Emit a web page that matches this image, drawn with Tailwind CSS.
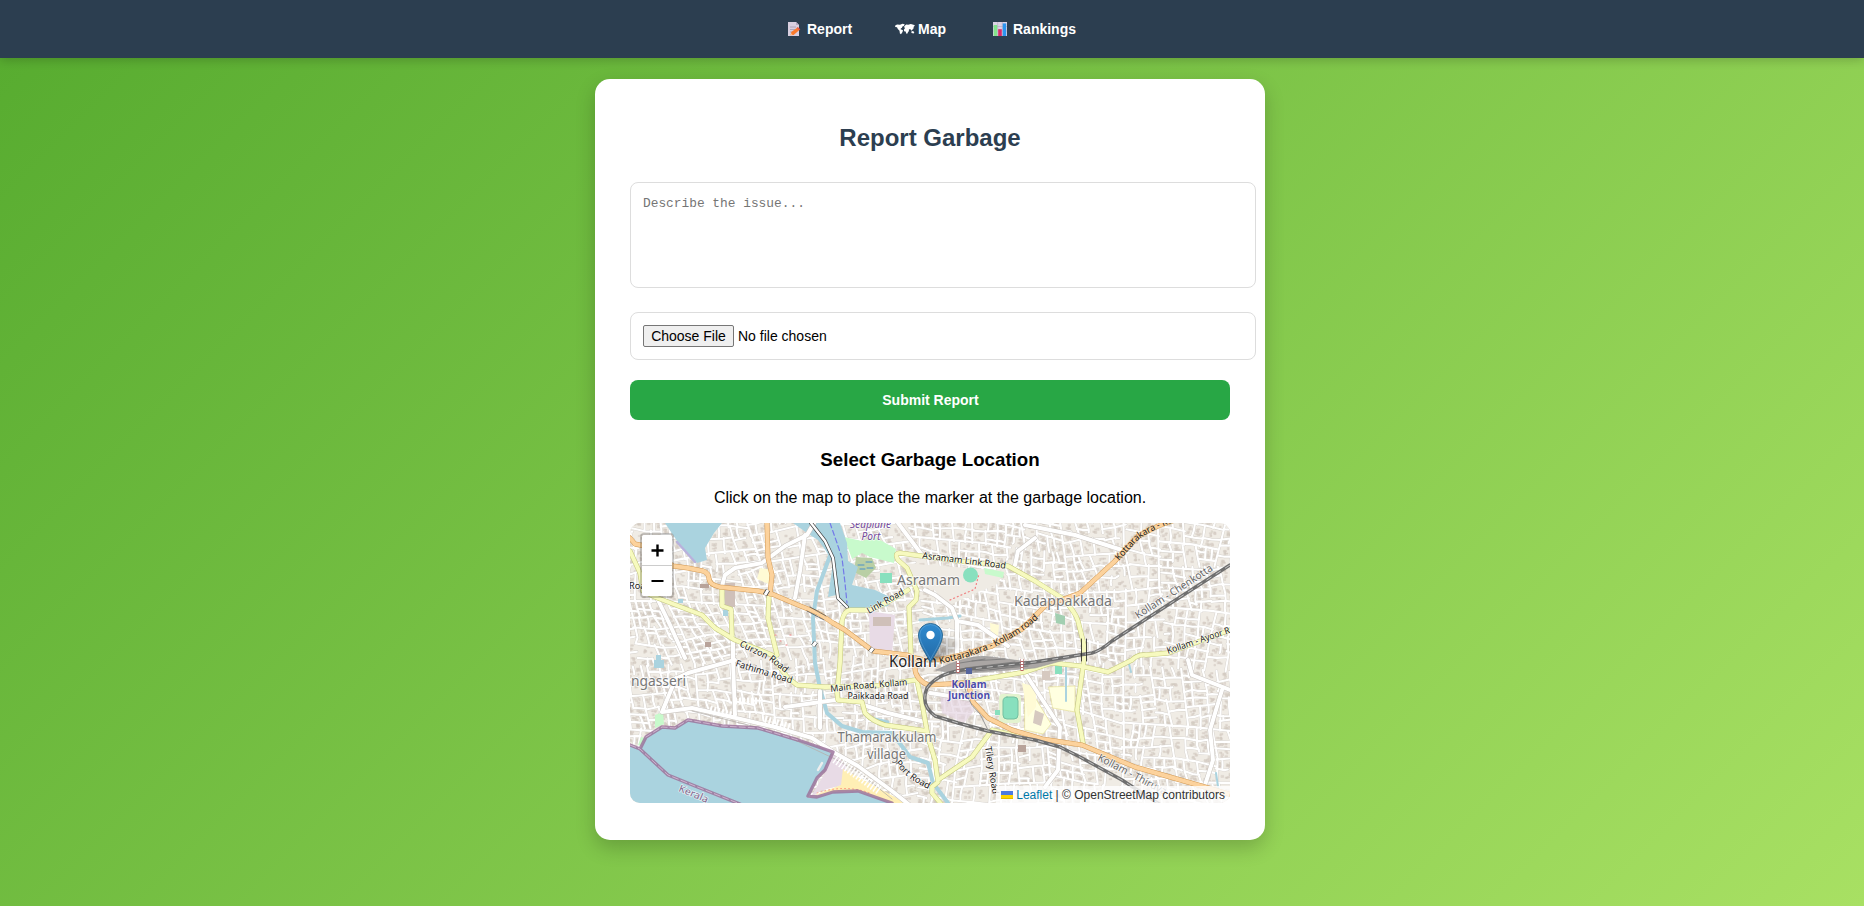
<!DOCTYPE html>
<html lang="en">
<head>
<meta charset="utf-8">
<title>Report Garbage</title>
<script src="https://cdn.jsdelivr.net/npm/@tailwindcss/browser@4"></script>
</head>
<body class="h-[906px] overflow-hidden bg-linear-[135deg,#56ab2f,#a8e063] font-['Liberation_Sans',Arial,sans-serif] text-black">
<nav class="relative flex h-[58px] items-center bg-[#2c3e50] pl-[787px] text-[14px] font-bold text-white shadow-[0_2px_10px_rgba(0,0,0,0.2)]">
  <a class="flex w-[108px] items-center">
    <svg class="mr-[6px] h-[14px] w-[14px]" viewBox="0 0 14 14"><path d="M1 0h8l3 3v11H1z" fill="#d9cfe0"/><path d="M9 0v3h3z" fill="#b5a9c2"/><path d="M3 5h6M3 7.500h5M3 10h3" stroke="#a399b0" stroke-width=".8"/><path d="M3.500 13.300l.8-3.200L9.800 6l2.300 2.300L6.600 13z" fill="#fa7a2c"/><path d="M9.500 6l1.300-1.100 2.500 2.400-1.200 1.200z" fill="#ea5540"/><path d="M3.500 13.300l.6-2 1.500 1.500z" fill="#ffc08a"/></svg>
    <span>Report</span>
  </a>
  <a class="flex w-[98px] items-center">
    <svg class="mr-[3px] h-[12px] w-[20px]" viewBox="0 0 20 12" fill="#fff"><path d="M0 2.800L2 1.500l3 .2L7.500.8l2.200.5L8.800 3l-1.400.6-.4 1.200L5.800 5.600l-.2.700 2.400 1L7.500 9 6 11.300 4.900 10.500l-.4-2.700-1.700-1.700L2 4.200.3 4z"/><path d="M9.200 3.300l2-1.700 2 .2 2.600-.8 2.700.7 1.500.8-1.300 1.200-.2 1.700-1.200 1.400-.8 1-.8-1.400-1-.3-1 1 .4.800-1.100 1-.5 1.600-1.100.3-.8-2.300-1.500-.3-.2-1.700.9-.8z"/><path d="M16.300 8.500l1.700-.6 1.300 1.300-.7 1.200-2.100-.4z"/></svg>
    <span>Map</span>
  </a>
  <a class="flex items-center">
    <svg class="mr-[6px] h-[14px] w-[14px]" viewBox="0 0 14 14"><path d="M0 0h14v14H0z" fill="#dcd2e5"/><path d="M0 4.500h14M0 9h14M4.700 0v14M9.300 0v14" stroke="#b3a8be" stroke-width=".6"/><path d="M.7 3h3.500v11H.7z" fill="#83e38b"/><path d="M5.200 7.200h3.600V14H5.200z" fill="#d92867"/><path d="M9.700 1.400h3.500V14H9.700z" fill="#2c95f0"/></svg>
    <span>Rankings</span>
  </a>
</nav>

<main class="mx-auto mt-[21px] flex h-[761px] w-[670px] -translate-x-[2px] flex-col rounded-[15px] bg-white px-[35px] shadow-[0_8px_20px_rgba(0,0,0,0.2)]">
  <h2 class="mt-[45px] text-center text-[24px] leading-[28px] font-bold text-[#2c3e50]">Report Garbage</h2>
  <textarea class="mt-[30px] h-[106px] w-[626px] shrink-0 resize-none rounded-[8px] border border-[#ddd] px-[12px] py-[12px] font-['Liberation_Mono',monospace] text-[12.85px] leading-[18px] placeholder:text-[#757575]" placeholder="Describe the issue..."></textarea>
  <div class="mt-[24px] flex h-[48px] w-[626px] items-center rounded-[8px] border border-[#ddd] px-[12px] text-[14px]">
    <button class="h-[22px] w-[91px] rounded-[2px] border border-[#767676] bg-[#efefef] leading-[20px] whitespace-nowrap">Choose File</button>
    <span class="ml-[4px]">No file chosen</span>
  </div>
  <button class="mt-[20px] h-[40px] w-full shrink-0 rounded-[8px] bg-[#28a745] pl-px text-[14px] font-bold text-white">Submit Report</button>
  <h3 class="mt-[29px] text-center text-[18.72px] leading-[22px] font-bold">Select Garbage Location</h3>
  <p class="mt-[18px] text-center text-[16px] leading-[18px]">Click on the map to place the marker at the garbage location.</p>

  <div class="relative mt-[16px] h-[280px] w-[600px] shrink-0 overflow-hidden rounded-[10px] bg-[#f0ece5]">
    <svg class="block h-[280px] w-[600px] font-['Noto_Sans',sans-serif]" viewBox="0 0 600 280" fill="none" stroke-linejoin="round" stroke-linecap="round">
      <path id="buildings" fill="#dfd7cf" stroke="#d2c9c0" stroke-width=".35"/>
      <path id="lanesCase" stroke="#d3cfca" stroke-width="2.900"/>
      <path id="lanes" stroke="#fff" stroke-width="2.100"/>

      <!-- land use -->
      <path d="M274 40L376 48 366 62 345 70 320 82 303 66 288 62z" fill="#efebe4"/>
      <path d="M239 88L265 92 262 132 240 128z" fill="#e8dbe6"/>
      <path d="M243 94h18v9h-18zM95 60h10v24h-10z" fill="#cfc0b9"/><path d="M70 61h9v4h-9zM75 119h6v5h-6zM388 222h8v7h-8z" fill="#b8a39a"/>
      <path d="M214 14L232 18 245 14 266 26 264 40 240 34 232 30 222 36z" fill="#c8facc"/>
      <path d="M226 34l16 1 4 10-10 10-12-6z" fill="#b9cfa5"/><path d="M228 42h6M236 39h6M230 46h5M237 45h6" stroke="#4a91c8"/>
      <path d="M250 50h12v10h-12zM425 142h7v9h-7zM429 174h6v6h-6z" fill="#88e0be"/>
      <path d="M354 45l20 4-1 6-18-4zM25 192l8-3 1 12-9 4zM11 214l9 2-4 9-8-3z" fill="#c8facc"/><path d="M425 90l10 3v9l-9-2z" fill="#a2cfb1"/>
      <circle cx="340.500" cy="52" r="7.500" fill="#88e0be"/>
      <path d="M395 172l8-1 18 30-8 10-18-4zM419 164l26-1v26l-22-4z" fill="#ffffe0" stroke="#e8e39a" stroke-width=".7"/>
      <path d="M130 45l12 2-1 15-14-6zM392 160l14 4v20l-8 10zM360 100l9 2-1 12-7 2z" fill="#fffbd5"/>
      <path d="M405 187l9 4-3 12-8-3zM412 148h8v9h-8z" fill="#d6c9c0"/>
      <rect x="369" y="171" width="22" height="29" rx="4" fill="#e3f3cf"/>
      <rect x="373" y="174" width="15" height="22" rx="4" fill="#88e0be" stroke="#74bfa0"/>
      <path d="M365 187h5v5h-5z" fill="#88e0be"/>
      <path d="M310 170l28 0 6 18-10 12-22-10z" fill="#e6d5e3" opacity=".7"/>

      <!-- water -->
      <g fill="#aad3df">
        <path d="M35 0L47 18 67 40 77 37 75 25 84 10 92 0z"/>
        <path d="M163 0H210L217 20 218 38 228 44 222 62 245 67 262 75 258 83 230 88 213 83 206 72 198 74 203 40 196 28 188 17 177 10z"/>
        <path d="M93 87h5v6h-5zM48 76h5v4h-5zM24 137h10v8h-10zM26 132h5v6h-5z"/>
        <path d="M0 222L10 226 16 214 32 204 45 205 58 197 92 203 128 205 168 217 203 229 195 247 187 255 178 275 187 274 203 269 228 268 262 280H0z"/>
      </g>
      <path d="M201 30L187 68 183 95 185 140 190 165 197 190 212 203 232 209 262 210 280 234 298 240 303 260 318 280" stroke="#aad3df" stroke-width="4"/>
      <path d="M245 196L258 199M290 97l28-2 12-2" stroke="#aad3df" stroke-width="3"/>
      <path d="M436 140v38M498 137l3 12M586 250l3 20" stroke="#aad3df" stroke-width="2"/>
      <path d="M47 19L65 39" stroke="#b8b2dc" stroke-width="2.500"/>
      <path d="M203 230L216 242 212 262 190 268 180 275 195 250z" fill="#e8dbe6"/>
      <path d="M185 272L211 262 213 246 276 280H262L228 268 205 269z" fill="#ffefb5"/>
      <path d="M187 270Q215 261 240 270" stroke="#ff9e80" stroke-dasharray="1 3"/>

      <!-- local streets -->
      <path stroke="#c9c4bf" stroke-width="5" d="M92 63L95 52 105 45 132 40 155 23 177 12 184 0M175 12L170 48 165 75M28 77L40 102 55 135M32 189L62 185 102 194 145 204 182 215 205 230 228 243 262 268 282 284M103 113V137L105 192M43 157L58 150 105 137M32 189L46 155M268 0L280 16 292 32M295 67L305 72 322 85 327 98 348 102 378 123M405 15L388 28 385 42M395 2L445 12 495 28M395 150L430 204 428 247 415 264M600 167L562 152 558 137M592 167L580 207 583 237 575 262M218 177L258 190 295 199M155 184L205 177M190 168V205M327 97V137M300 170L340 176"/>
      <path stroke="#fff" stroke-width="4" d="M92 63L95 52 105 45 132 40 155 23 177 12 184 0M175 12L170 48 165 75M28 77L40 102 55 135M32 189L62 185 102 194 145 204 182 215 205 230 228 243 262 268 282 284M103 113V137L105 192M43 157L58 150 105 137M32 189L46 155M268 0L280 16 292 32M295 67L305 72 322 85 327 98 348 102 378 123M405 15L388 28 385 42M395 2L445 12 495 28M395 150L430 204 428 247 415 264M600 167L562 152 558 137M592 167L580 207 583 237 575 262M218 177L258 190 295 199M155 184L205 177M190 168V205M327 97V137M300 170L340 176"/>
      <path d="M62 188L102 198 150 210 205 236 230 250 262 276" stroke="#b5b0ac" stroke-width=".8"/>
      <path d="M205 236L250 268" stroke="#fff" stroke-width="9" stroke-dasharray="1.500 2" stroke-linecap="butt"/>
      <path d="M80 186L105 193M105 178H130M135 196L160 204" stroke="#fff" stroke-width="7" stroke-dasharray="2 2" stroke-linecap="butt"/>

      <!-- bridge and ferry -->
      <path d="M181 0L195 18 203 35 208 75 217 84" stroke="#444" stroke-width="3.800"/>
      <path d="M181 0L195 18 203 35 208 75 217 84" stroke="#fff" stroke-width="2.400"/>
      <path d="M200 0L207 20 212 35 215 60 217 80" stroke="#7379e8" stroke-width="1.200" stroke-dasharray="5 3"/>

      <!-- yellow roads -->
      <g stroke="#c5c97d" stroke-width="5">
        <path d="M0 28L10 50 13 68 25 74 72 92 85 105 105 117 142 132 148 142 158 155 167 162 195 164 245 163 285 157M92 67V83L101 86 102 113M139 73L138 95 147 132M502 137L478 149 450 143 422 140 395 149 348 157 325 161M502 137Q508 131 516 132L538 130 600 107"/>
        <path d="M210 140L212 98Q214 88 220 87H240Q258 80 278 67M210 140L207 170 208 177 232 179 235 190Q242 198 255 202L297 208M281 132L279 84 286 77 287 68 277 45 268 37Q264 30 270 30L328 38 378 43 405 58 432 75Q445 88 448 98L454 122V137L447 187 453 220M287 158L292 180 298 214 305 237 308 259 302 264V270L312 282M308 257L342 234 362 207 388 213"/>
      </g>
      <g stroke="#f7fabf" stroke-width="3.900">
        <path d="M0 28L10 50 13 68 25 74 72 92 85 105 105 117 142 132 148 142 158 155 167 162 195 164 245 163 285 157M92 67V83L101 86 102 113M139 73L138 95 147 132M502 137L478 149 450 143 422 140 395 149 348 157 325 161M502 137Q508 131 516 132L538 130 600 107"/>
        <path d="M210 140L212 98Q214 88 220 87H240Q258 80 278 67M210 140L207 170 208 177 232 179 235 190Q242 198 255 202L297 208M281 132L279 84 286 77 287 68 277 45 268 37Q264 30 270 30L328 38 378 43 405 58 432 75Q445 88 448 98L454 122V137L447 187 453 220M287 158L292 180 298 214 305 237 308 259 302 264V270L312 282M308 257L342 234 362 207 388 213"/>
      </g>

      <!-- orange roads -->
      <path stroke="#d39a55" stroke-width="5" d="M0 15L5 21 15 23 43 43 58 45 73 48Q79 50 79 56Q80 62 90 64L128 68 142 71 168 82 188 90 203 100 215 107 243 128 277 132Q285 134 285 145Q285 156 298 162L335 160M280 133Q300 142 338 130L362 123 392 106 415 83 450 70 485 38 508 13 528 3 545 -3M137 0L138 35 142 52 140 71M338 160L343 179 358 195 382 207 412 216 452 222 505 244 575 264 602 272"/>
      <path stroke="#fcd29c" stroke-width="4" d="M0 15L5 21 15 23 43 43 58 45 73 48Q79 50 79 56Q80 62 90 64L128 68 142 71 168 82 188 90 203 100 215 107 243 128 277 132Q285 134 285 145Q285 156 298 162L335 160M280 133Q300 142 338 130L362 123 392 106 415 83 450 70 485 38 508 13 528 3 545 -3M137 0L138 35 142 52 140 71M338 160L343 179 358 195 382 207 412 216 452 222 505 244 575 264 602 272"/>
      <path d="M180 84L196 93M177 88L194 97" stroke="#555" stroke-width=".8"/>
      <path d="M135 72l3-5M183 123l3-4M240 129l3-4" stroke="#444" stroke-width="4.500" stroke-linecap="butt"/><path d="M135 72l3-5M183 123l3-4M240 129l3-4" stroke="#fff" stroke-width="3" stroke-linecap="butt"/>

      <!-- railway -->
      <path d="M306 147Q340 130 362 134L398 139 460 130 405 145 328 151z" fill="#aaa6a4" stroke="#999" stroke-width=".6"/>
      <path d="M330 140L355 136M335 145L385 139M345 148L398 143M360 147L400 141M342 138L375 136" stroke="#777" stroke-width=".8"/>
      <path d="M600 42L513 98 482 118Q470 128 462 130L405 139 340 146Q308 149 297 165Q290 182 305 193L328 200 358 208 405 217 430 224 450 234 492 257 512 270 534 284" stroke="#6f6f6f" stroke-width="3.400"/>
      <path d="M600 42L513 98 482 118Q470 128 462 130L405 139 340 146Q308 149 297 165Q290 182 305 193L328 200 358 208 405 217 430 224 450 234 492 257 512 270 534 284" stroke="#ccc" stroke-width=".9" stroke-dasharray="6 5" stroke-linecap="butt"/>
      <path d="M335 155Q332 175 350 191L358 207" stroke="#999"/>
      <path d="M328 138v12M392 136v12" stroke="#b66" stroke-width="3" stroke-linecap="butt"/><path d="M328 138v12M392 136v12" stroke="#fff" stroke-width="2" stroke-dasharray="2 1" stroke-linecap="butt"/>
      <path d="M336 145h6v6h-6z" fill="#56659c"/>
      <path d="M456.500 116V138M451.500 116V138" stroke="#222" stroke-width=".8"/>

      <!-- coast boundary -->
      <path stroke="#9c749c" stroke-width="3.400" opacity=".85" d="M0 222L10 226 38 252 65 263 110 281M10 226L16 214 32 204 45 205 58 197 92 203 128 205 168 217 203 229 195 247 187 255 178 273 187 274 203 269 228 268 262 280"/>
      <path d="M0 222L10 226 38 252 65 263 110 281M16 214L32 204 45 205 58 197 92 203 128 205 168 217" stroke="#d3b9d3" stroke-width=".9" stroke-dasharray="6 3"/>
      <path d="M188 247l4-7" stroke="#eee" stroke-width="2.500"/>
      <path d="M145 112h1M150 118h1M156 122h1M160 112h1M320 77l25-11 4-15" stroke="#f08080" stroke-width="1.200" stroke-dasharray="1 3"/>

      <defs>
        <path id="p1" d="M292 35.500L330 40 377 46"/><path id="p2" d="M239 91L276 70"/>
        <path id="p3" d="M310 141L338 134 362 125Q390 113 412 92"/><path id="p4" d="M489 38L508 17Q522 6 550 -3"/>
        <path id="p5" d="M508 96L588 44"/><path id="p6" d="M538 131L606 108"/>
        <path id="p7" d="M109 123L140 138 162 155"/><path id="p8" d="M105 143L166 162"/>
        <path id="p9" d="M201 169Q235 165 282 162"/><path id="p10" d="M265 240Q276 257 305 269"/>
        <path id="p11" d="M355 224L364 280"/><path id="p12" d="M467 237L540 275"/><path id="p13" d="M48 268L84 283"/>
      </defs>
      <g fill="#222" font-size="9.200" stroke="#fff" stroke-opacity=".65" stroke-width="1.500" style="paint-order:stroke">
        <text><textPath href="#p1" textLength="84" lengthAdjust="spacingAndGlyphs">Asramam Link Road</textPath></text>
        <text><textPath href="#p2" textLength="41" lengthAdjust="spacingAndGlyphs">Link Road</textPath></text>
        <g stroke="#fcd29c"><text><textPath href="#p3" textLength="110" lengthAdjust="spacingAndGlyphs">Kottarakara - Kollam road</textPath></text>
        <text><textPath href="#p4" textLength="68" lengthAdjust="spacingAndGlyphs">Kottarakara - Ko</textPath></text></g>
        <text><textPath href="#p6" textLength="66" lengthAdjust="spacingAndGlyphs">Kollam - Ayoor R</textPath></text>
        <text><textPath href="#p7" textLength="54" lengthAdjust="spacingAndGlyphs">Curzon Road</textPath></text>
        <text><textPath href="#p8" textLength="59" lengthAdjust="spacingAndGlyphs">Fathima Road</textPath></text>
        <text><textPath href="#p9" textLength="77" lengthAdjust="spacingAndGlyphs">Main Road, Kollam</textPath></text>
        <text x="217.500" y="175.500" textLength="61" lengthAdjust="spacingAndGlyphs">Paikkada Road</text>
        <text><textPath href="#p10" textLength="43" lengthAdjust="spacingAndGlyphs">Port Road</textPath></text>
        <text><textPath href="#p11" textLength="48" lengthAdjust="spacingAndGlyphs">Tilery Road</textPath></text>
        <text x="-1" y="66">Roa</text>
        <g fill="#666" font-size="10.500"><text><textPath href="#p5" textLength="90" lengthAdjust="spacingAndGlyphs">Kollam - Chenkotta</textPath></text>
        <text><textPath href="#p12" textLength="76" lengthAdjust="spacingAndGlyphs">Kollam - Thiruva</textPath></text></g>
        <g fill="#87698f" font-size="10"><text><textPath href="#p13" textLength="31" lengthAdjust="spacingAndGlyphs">Kerala</textPath></text></g>
        <g fill="#734a9c" font-size="10" font-style="italic"><text x="220" y="4.500" textLength="41" lengthAdjust="spacingAndGlyphs">Seaplane</text><text x="231.500" y="16.500" textLength="19" lengthAdjust="spacingAndGlyphs">Port</text></g>
        <g fill="#4d4dab" font-size="10" font-weight="bold"><text x="321.500" y="164.500" textLength="35" lengthAdjust="spacingAndGlyphs">Kollam</text><text x="318" y="176" textLength="42" lengthAdjust="spacingAndGlyphs">Junction</text></g>
      </g>
      <g fill="#777" font-size="14" stroke="#fff" stroke-opacity=".7" stroke-width="2" style="paint-order:stroke">
        <text x="267" y="61.500" textLength="63" lengthAdjust="spacingAndGlyphs">Asramam</text>
        <text x="384" y="82.500" textLength="98" lengthAdjust="spacingAndGlyphs">Kadappakkada</text>
        <text x="1" y="163" textLength="55" lengthAdjust="spacingAndGlyphs">ngasseri</text>
        <text x="207.500" y="219" textLength="99" lengthAdjust="spacingAndGlyphs">Thamarakkulam</text>
        <text x="237" y="235.500" textLength="39" lengthAdjust="spacingAndGlyphs">village</text>
        <text x="259" y="143.500" font-size="15.500" fill="#222" textLength="48" lengthAdjust="spacingAndGlyphs">Kollam</text>
      </g>

      <!-- location marker -->
      <defs>
        <linearGradient id="pin" x2="0" y2="1"><stop stop-color="#2f8bd0"/><stop offset="1" stop-color="#2268a4"/></linearGradient>
        <linearGradient id="shade" x1="0" y1="1" x2="1" y2="0"><stop stop-color="#000" stop-opacity=".4"/><stop offset="1" stop-color="#000" stop-opacity=".05"/></linearGradient>
        <filter id="soft" x="-.3" y="-.3" width="1.600" height="1.600"><feGaussianBlur stdDeviation="1.500"/></filter>
      </defs>
      <path d="M300 140L304 125Q310 113 320 114Q331 117 325 126Q318 133 300 140z" fill="url(#shade)" filter="url(#soft)"/>
      <path d="M300.500 140C297 132 288.500 121 288.500 112a12 11.500 0 0 1 24 0C312.500 121 304 132 300.500 140z" fill="url(#pin)" stroke="#2e6c97" stroke-width="1"/>
      <path d="M300.500 136.500C297 129 289.700 120 289.700 112a10.800 10.400 0 0 1 21.600 0C311.300 120 304 129 300.500 136.500z" stroke="#7db8e4" stroke-opacity=".4"/>
      <circle cx="300.500" cy="112" r="4.200" fill="#fff"/>
    </svg>

    <div class="absolute top-[10px] left-[10px] rounded-[4px] border-2 border-black/20 bg-clip-padding">
      <button class="flex h-[31px] w-[30px] items-center justify-center rounded-t-[2px] border-b border-[#ccc] bg-white" aria-label="Zoom in"><svg class="h-[13px] w-[13px]" viewBox="0 0 13 13"><path d="M.5 6.500h12M6.500 .5v12" stroke="#000" stroke-width="2.400"/></svg></button>
      <button class="flex h-[30px] w-[30px] items-center justify-center rounded-b-[2px] bg-white" aria-label="Zoom out"><svg class="ml-px h-[12px] w-[13px]" viewBox="0 0 13 12"><path d="M.5 6h12" stroke="#000" stroke-width="2"/></svg></button>
    </div>
    <div class="absolute right-0 bottom-0 flex h-[17px] items-center bg-white/80 px-[5px] pt-px text-[12px] leading-[17px] whitespace-pre text-[#333]"><svg class="mr-[3px] h-[8px] w-[12px]" viewBox="0 0 12 8"><path fill="#4C7BE1" d="M0 0h12v4H0z"/><path fill="#FFD500" d="M0 4h12v3H0z"/><path fill="#E0BC00" d="M0 7h12v1H0z"/></svg><a class="text-[#0078a8]">Leaflet</a> | © OpenStreetMap contributors</div>
  </div>
</main>

<script>
// Residential street lattice: irregular quads, split until they are one block in size.
let seed = 41;
const rnd = () => (seed = (seed * 16807) % 2147483647) / 2147483647;
const mix = (a, b, t) => [a[0] + (b[0] - a[0]) * t, a[1] + (b[1] - a[1]) * t];
const len = (a, b) => Math.hypot(a[0] - b[0], a[1] - b[1]);
const f = p => p[0].toFixed(1) + ' ' + p[1].toFixed(1);
let lanes = '', houses = '';
function split(a, b, c, d) {
  const w = (len(a, b) + len(d, c)) / 2, h = (len(a, d) + len(b, c)) / 2;
  if (Math.max(w, h) < 11 + rnd() * 11) {
    for (let i = 0; i < 6; i++) {
      const p = mix(mix(a, b, .15 + rnd() * .6), mix(d, c, .15 + rnd() * .6), .15 + rnd() * .6);
      const s = 1 + rnd() * 1.6;
      houses += 'M' + f(p) + 'h' + s.toFixed(1) + 'v' + (1 + rnd() * 1.4).toFixed(1) + 'h-' + s.toFixed(1) + 'z';
    }
    return;
  }
  const t = .33 + rnd() * .34, u = Math.min(.75, Math.max(.25, t + (rnd() - .5) * .24));
  const across = w > h;
  const p = across ? mix(a, b, t) : mix(a, d, t), q = across ? mix(d, c, u) : mix(b, c, u);
  const m = mix(p, q, .5), e = rnd() < .18 ? mix(p, q, .65) : q;
  const k = Math.min(8, len(p, q) * .12);
  m[0] += (rnd() - .5) * k; m[1] += (rnd() - .5) * k;
  lanes += 'M' + f(p) + 'L' + f(m) + 'L' + f(e);
  if (across) { split(a, p, q, d); split(p, b, c, q); }
  else { split(a, b, q, p); split(p, q, c, d); }
}
split([-40, -30], [270, -50], [300, 130], [-30, 145]);
split([270, -50], [640, -10], [620, 150], [300, 130]);
split([-30, 145], [300, 130], [285, 300], [-10, 300]);
split([300, 130], [620, 150], [640, 310], [285, 300]);
document.getElementById('lanes').setAttribute('d', lanes);
document.getElementById('lanesCase').setAttribute('d', lanes);
document.getElementById('buildings').setAttribute('d', houses);
</script>
</body>
</html>
